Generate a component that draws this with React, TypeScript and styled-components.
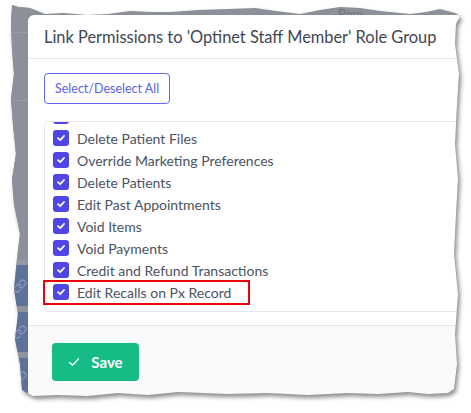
import styled, {createGlobalStyle} from 'styled-components'

const GlobalStyle = createGlobalStyle`
    html, body {
        margin: 0;
        padding: 0;
        background: #ffffff;
    }
    body {
        font-family: Lato, "Noto Sans", sans-serif;
    }
`

// torn paper outline, px relative to the frame (frame sits at 8,4)
const TORN = [
    [4, 1], [10, 3], [22, 4], [37, 10], [55, 9], [80, 11], [100, 10], [122, 7], [145, 8],
    [162, 8], [190, 6], [220, 5], [247, 4], [268, 7], [292, 10], [312, 6], [332, 3],
    [352, 4], [372, 7], [402, 10], [418, 8], [432, 5], [447, 9], [452, 12], [448, 20],
    [447, 40], [451, 70], [449, 100], [447, 140], [450, 175], [448, 210], [446, 250],
    [450, 290], [447, 330], [449, 360], [446, 385], [440, 389], [420, 390], [400, 388],
    [370, 390], [340, 389], [300, 391], [260, 389], [220, 390], [170, 388], [140, 391],
    [110, 389], [80, 392], [50, 391], [25, 392], [14, 386], [12, 360], [7, 335], [10, 310],
    [6, 285], [9, 255], [12, 230], [6, 200], [4, 175], [8, 150], [5, 120], [3, 95],
    [6, 70], [4, 45], [3, 20],
]
const tornPath = `polygon(${TORN.map(([x, y]) => `${x}px ${y}px`).join(', ')})`

const PERMISSIONS = [
    'Edit Patient Files',
    'Delete Patient Files',
    'Override Marketing Preferences',
    'Delete Patients',
    'Edit Past Appointments',
    'Void Items',
    'Void Payments',
    'Credit and Refund Transactions',
    'Edit Recalls on Px Record',
]

const App = () => {
    return <>
        <GlobalStyle />
        <Shadow>
            <Frame>
                <Ghost>Rem</Ghost>
                <Backdrop>
                    <StripTop />
                    <StripBand />
                    <StripLink><LinkIcon /></StripLink>
                    <StripGap />
                    <StripLink><LinkIcon /></StripLink>
                    <StripGap />
                    <StripLink><LinkIcon /></StripLink>
                </Backdrop>
                <Modal>
                    <Header>Link Permissions to 'Optinet Staff Member' Role Group</Header>
                    <Body>
                        <OutlineButton>Select/Deselect All</OutlineButton>
                        <List>
                            <Scroller>
                                {PERMISSIONS.map((label, i) => (
                                    <Row key={label}>
                                        <Check>
                                            <svg width="10" height="10" viewBox="0 0 10 10">
                                                <path d="M2 5.2 L4.2 7.2 L8 3" fill="none" stroke="#fff" strokeWidth="1.8" strokeLinecap="round" strokeLinejoin="round" />
                                            </svg>
                                        </Check>
                                        {label}
                                        {i === PERMISSIONS.length - 1 && <Highlight />}
                                    </Row>
                                ))}
                            </Scroller>
                        </List>
                    </Body>
                    <Footer>
                        <SaveButton>
                            <svg width="12" height="10" viewBox="0 0 12 10">
                                <path d="M1.5 5.5 L4.5 8.2 L10.5 1.8" fill="none" stroke="#fff" strokeWidth="1.3" strokeLinecap="round" strokeLinejoin="round" />
                            </svg>
                            Save
                        </SaveButton>
                    </Footer>
                </Modal>
            </Frame>
        </Shadow>
    </>
}

const LinkIcon = () => (
    <svg width="14" height="14" viewBox="0 0 24 24" fill="none" stroke="#8a98b8" strokeWidth="2.2" strokeLinecap="round" strokeLinejoin="round">
        <path d="M10 13a5 5 0 0 0 7.54.54l3-3a5 5 0 0 0-7.07-7.07l-1.72 1.71" />
        <path d="M14 11a5 5 0 0 0-7.54-.54l-3 3a5 5 0 0 0 7.07 7.07l1.71-1.71" />
    </svg>
)

export default App

const Shadow = styled.div`
    width: 460px;
    height: 400px;
    padding: 4px 0 0 8px;
    filter: drop-shadow(2px 3px 2px rgba(0, 0, 0, 0.45));
`

const Frame = styled.div`
    position: relative;
    width: 454px;
    height: 394px;
    background: #8c9199;
    clip-path: ${tornPath};
    display: flex;
    padding-top: 11px;
    box-sizing: border-box;
    overflow: hidden;
`

const Backdrop = styled.div`
    width: 20px;
    flex-shrink: 0;
    display: flex;
    flex-direction: column;
    margin-top: -11px;
`

const StripTop = styled.div`
    height: 266px;
    background: linear-gradient(#8c9199 0 28px, #989ca3 28px 29px, #8c9199 29px 96px, #979ba2 96px 97px, #8c9199 97px);
`

const StripBand = styled.div`
    height: 6px;
    background: #9499a1;
`

const StripLink = styled.div`
    height: 42px;
    background: #5e7199;
    display: flex;
    align-items: center;
    justify-content: center;
    padding-left: 4px;
`

const StripGap = styled.div`
    height: 6px;
    background: #8f949c;
`

const Modal = styled.div`
    position: relative;
    flex: 1;
    background: #ffffff;
    border-radius: 6px 0 0 6px;
    display: flex;
    flex-direction: column;
    min-width: 0;
`

const Header = styled.div`
    height: 48px;
    padding: 0 16px;
    display: flex;
    align-items: center;
    font-size: 16.4px;
    color: #3f4654;
    border-bottom: 1px solid #e5e7eb;
    white-space: nowrap;
    box-sizing: border-box;
`

const Body = styled.div`
    padding: 14px 16px 13px 16px;
    display: flex;
    flex-direction: column;
    align-items: flex-start;
    gap: 17px;
`

const OutlineButton = styled.button`
    height: 31px;
    padding: 0 10px;
    border: 1px solid #6366f1;
    border-radius: 4px;
    background: #ffffff;
    color: #5b5fe9;
    font-family: inherit;
    font-size: 12.5px;
`

const List = styled.div`
    align-self: stretch;
    margin-right: -20px;
    height: 191px;
    border: 1px solid #e5e7eb;
    border-radius: 4px;
    overflow-x: visible;
    overflow-y: clip;
    box-sizing: border-box;
`

const Scroller = styled.div`
    margin-top: -17px;
    padding-left: 8px;
`

const Row = styled.div`
    position: relative;
    height: 22px;
    display: flex;
    align-items: center;
    gap: 8px;
    font-size: 14px;
    color: #4b5261;
    white-space: nowrap;
`

const Check = styled.span`
    width: 16px;
    height: 16px;
    border-radius: 3px;
    background: #4f46e5;
    display: inline-flex;
    align-items: center;
    justify-content: center;
    flex-shrink: 0;
`

const Highlight = styled.span`
    position: absolute;
    left: -10px;
    top: -1px;
    width: 207px;
    height: 25px;
    border: 2px solid #e8000b;
    box-sizing: border-box;
`

const Footer = styled.div`
    flex: 1;
    background: #f9fafb;
    border-top: 1px solid #e5e7eb;
    padding: 17px 24px;
`

const SaveButton = styled.button`
    height: 38px;
    width: 87px;
    border: none;
    border-radius: 4px;
    background: #16bc85;
    color: #ffffff;
    font-family: inherit;
    font-size: 15px;
    font-weight: 700;
    display: flex;
    align-items: center;
    justify-content: center;
    gap: 11px;
`

const Ghost = styled.span`
    position: absolute;
    left: 330px;
    top: 2px;
    font-size: 13px;
    color: #6e737b;
`
